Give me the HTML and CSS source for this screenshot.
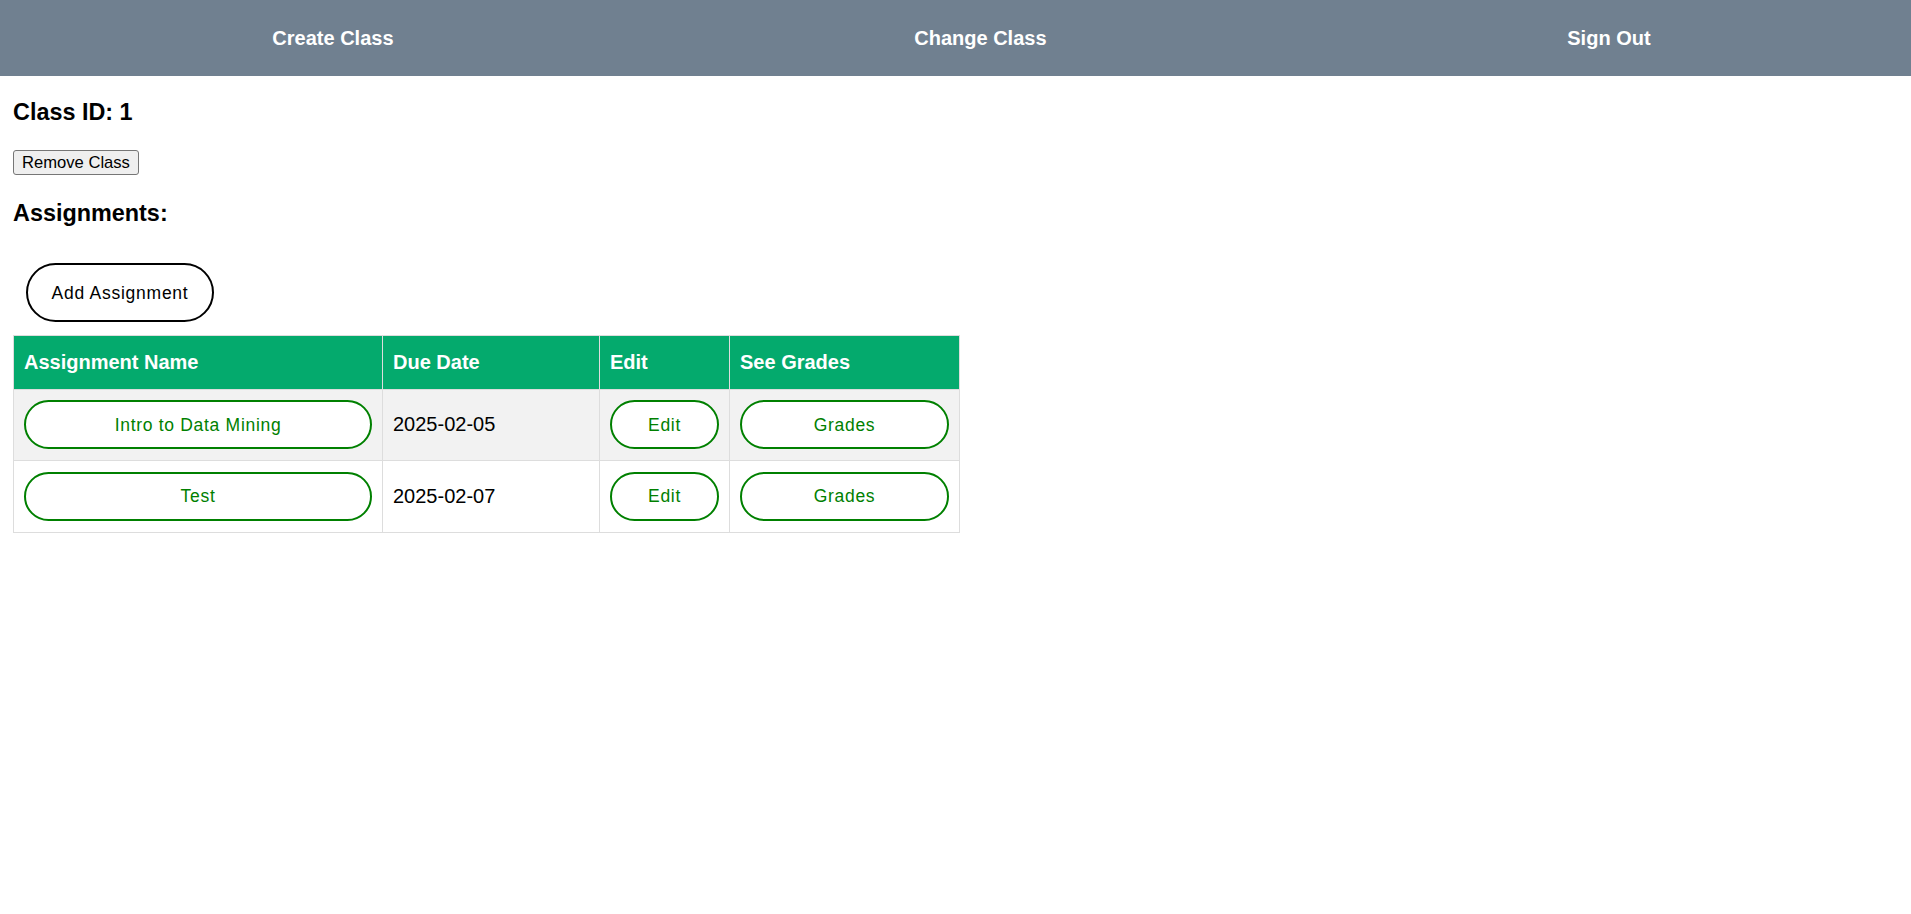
FILE: index.html
```html
<!DOCTYPE html>
<html lang="en">
<head>
<meta charset="utf-8">
<title>Class</title>
<link rel="stylesheet" href="styles.css">
</head>
<body>
<nav class="topnav">
  <a class="nav-link" href="#">Create Class</a>
  <a class="nav-link" href="#">Change Class</a>
  <a class="nav-link" href="#">Sign Out</a>
</nav>
<main class="content">
  <h3 class="heading heading-class">Class ID: 1</h3>
  <div class="remove-row"><button class="btn-remove">Remove Class</button></div>
  <h3 class="heading heading-assign">Assignments:</h3>
  <div class="add-row"><button class="btn-add">Add Assignment</button></div>
  <table class="assign-table">
    <colgroup>
      <col class="col-name">
      <col class="col-date">
      <col class="col-edit">
      <col class="col-grades">
    </colgroup>
    <thead>
      <tr>
        <th>Assignment Name</th>
        <th>Due Date</th>
        <th>Edit</th>
        <th>See Grades</th>
      </tr>
    </thead>
    <tbody>
      <tr class="row-alt">
        <td><button class="btn-pill">Intro to Data Mining</button></td>
        <td class="date">2025-02-05</td>
        <td><button class="btn-pill">Edit</button></td>
        <td><button class="btn-pill">Grades</button></td>
      </tr>
      <tr>
        <td><button class="btn-pill">Test</button></td>
        <td class="date">2025-02-07</td>
        <td><button class="btn-pill">Edit</button></td>
        <td><button class="btn-pill">Grades</button></td>
      </tr>
    </tbody>
  </table>
</main>
</body>
</html>
```

FILE: styles.css
```css
* { box-sizing: border-box; }

body {
  margin: 0;
  font-family: "Liberation Sans", Arial, sans-serif;
  color: #000;
  background: #fff;
}

.topnav {
  height: 76px;
  background: #708090;
  display: flex;
  align-items: center;
  justify-content: space-around;
  padding-left: 12px;
}

.nav-link {
  color: #fff;
  font-weight: bold;
  font-size: 20px;
  line-height: 23px;
  text-decoration: none;
  padding-top: 1px;
}

.content {
  padding: 0 13px;
}

.heading {
  font-size: 23.4px;
  line-height: 27px;
  font-weight: bold;
  margin: 0;
}

.heading-class { margin-top: 23px; }

.remove-row { margin-top: 24px; display: flex; }

.btn-remove {
  font-family: "Liberation Sans", Arial, sans-serif;
  font-size: 16.6px;
  line-height: 19px;
  padding: 2px 8px;
  border: 1px solid #767676;
  border-radius: 3px;
  background: #efefef;
  color: #000;
}

.heading-assign { margin-top: 24.5px; }

.add-row { margin-top: 36.5px; padding-left: 13px; display: flex; }

.btn-add {
  font-family: "Liberation Sans", Arial, sans-serif;
  font-size: 17.5px;
  line-height: 20px;
  letter-spacing: 0.75px;
  padding: 17.5px 23.5px;
  border: 2px solid #000;
  border-radius: 30px;
  background: #fff;
  color: #000;
}

.assign-table {
  margin-top: 13px;
  border-collapse: collapse;
  table-layout: fixed;
  width: 946px;
}

.col-name { width: 369px; }
.col-date { width: 217px; }
.col-edit { width: 130px; }
.col-grades { width: 230px; }

.assign-table th,
.assign-table td {
  border: 1px solid #ddd;
  text-align: left;
}

.assign-table th {
  background: #04AA6D;
  color: #fff;
  font-size: 20px;
  line-height: 23px;
  font-weight: bold;
  padding: 15px 10px 14.5px;
}

.assign-table td {
  padding: 10.75px 10px;
  font-size: 20px;
  line-height: 23px;
}

.row-alt { background: #f2f2f2; }

.btn-pill {
  display: block;
  width: 100%;
  font-family: "Liberation Sans", Arial, sans-serif;
  font-size: 17.5px;
  line-height: 20px;
  letter-spacing: 0.7px;
  padding: 12.5px 10px;
  border: 2px solid #008000;
  border-radius: 25px;
  background: #fff;
  color: #008000;
  text-align: center;
}
```
